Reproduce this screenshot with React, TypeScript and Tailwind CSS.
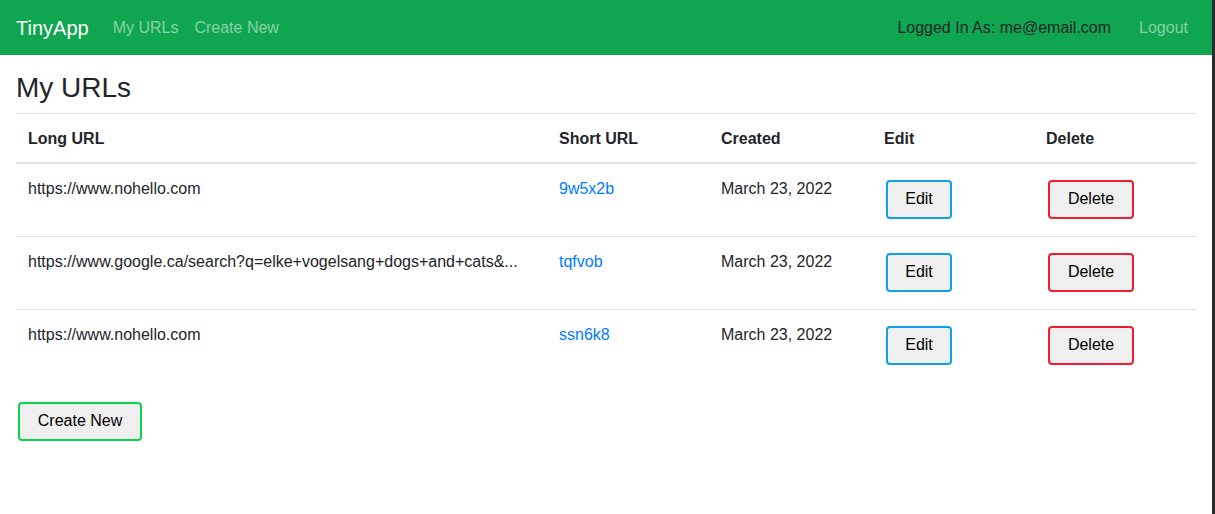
import React from "react";

type UrlRow = { longURL: string; shortURL: string; created: string };

const urls: UrlRow[] = [
  { longURL: "https://www.nohello.com", shortURL: "9w5x2b", created: "March 23, 2022" },
  {
    longURL: "https://www.google.ca/search?q=elke+vogelsang+dogs+and+cats&...",
    shortURL: "tqfvob",
    created: "March 23, 2022",
  },
  { longURL: "https://www.nohello.com", shortURL: "ssn6k8", created: "March 23, 2022" },
];

function Header() {
  return (
    <nav className="flex h-[55px] items-center bg-[#10a64f] pl-4 pr-6">
      <a href="#" className="mr-6 text-[20px] text-white">
        TinyApp
      </a>
      <a href="#" className="mr-4 text-white/50">
        My URLs
      </a>
      <a href="#" className="text-white/50">
        Create New
      </a>
      <div className="ml-auto flex items-center">
        <span className="text-[#212529]">Logged In As: me@email.com</span>
        <a href="#" className="ml-[28px] text-white/50">
          Logout
        </a>
      </div>
    </nav>
  );
}

function UrlTable() {
  return (
    <table className="w-full table-fixed border-collapse text-left">
      <colgroup>
        <col className="w-[531px]" />
        <col className="w-[162px]" />
        <col className="w-[163px]" />
        <col className="w-[162px]" />
        <col className="w-[162px]" />
      </colgroup>
      <thead>
        <tr className="border-t border-b-2 border-t-[#dee2e6] border-b-[#dee2e6]">
          <th className="px-3 pt-[13px] pb-[11px] font-bold">Long URL</th>
          <th className="px-3 pt-[13px] pb-[11px] font-bold">Short URL</th>
          <th className="px-3 pt-[13px] pb-[11px] font-bold">Created</th>
          <th className="px-3 pt-[13px] pb-[11px] font-bold">Edit</th>
          <th className="px-3 pt-[13px] pb-[11px] font-bold">Delete</th>
        </tr>
      </thead>
      <tbody>
        {urls.map((url, i) => (
          <tr key={url.shortURL} className={i > 0 ? "border-t border-[#dee2e6]" : ""}>
            <td className="overflow-hidden px-3 pt-[13px] pb-3 align-top whitespace-nowrap">{url.longURL}</td>
            <td className="px-3 pt-[13px] pb-3 align-top">
              <a href="#" className="text-[#007bff]">
                {url.shortURL}
              </a>
            </td>
            <td className="px-3 pt-[13px] pb-3 align-top">{url.created}</td>
            <td className="px-3 py-3 align-top">
              <button
                type="button"
                className="mt-[4px] mb-[5px] ml-[2px] h-[39px] w-[66px] rounded-[4px] border-2 border-[#0ea1ea] bg-[#efefef] text-black"
              >
                Edit
              </button>
            </td>
            <td className="px-3 py-3 align-top">
              <button
                type="button"
                className="mt-[4px] mb-[5px] ml-[2px] h-[39px] w-[86px] rounded-[4px] border-2 border-[#ee1f30] bg-[#efefef] text-black"
              >
                Delete
              </button>
            </td>
          </tr>
        ))}
      </tbody>
    </table>
  );
}

export default function App() {
  return (
    <div className="flex min-h-[514px] bg-white font-['Liberation_Sans',Arial,sans-serif] text-[16px] leading-6 text-[#212529]">
      <div className="min-w-0 flex-1">
        <Header />
        <main className="px-4 pt-4">
          <h3 className="mb-2 text-[28px] leading-[1.2] font-medium">My URLs</h3>
          <UrlTable />
          <button
            type="button"
            className="mt-[20px] ml-[2px] h-[39px] w-[124px] rounded-[4px] border-2 border-[#0ad447] bg-[#efefef] text-black"
          >
            Create New
          </button>
        </main>
      </div>
      <div className="w-[3px] bg-[#2a2b2e]" />
    </div>
  );
}
